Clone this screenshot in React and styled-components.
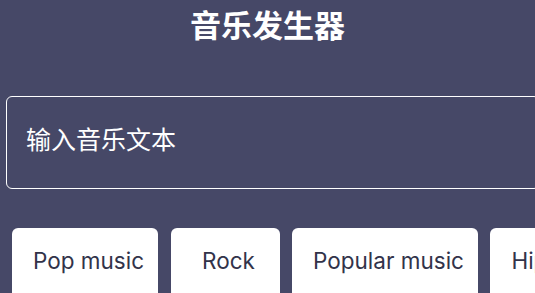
import React from "react";
import styled, { createGlobalStyle } from "styled-components";

const Global = createGlobalStyle`
  html, body { margin: 0; padding: 0; background: #464867; }
  body { overflow: hidden; }
  * { box-sizing: border-box; }
`;

const Page = styled.div`
  width: 535px;
  height: 293px;
  overflow: hidden;
  background: #464867;
  font-family: Inter, "Noto Sans CJK SC", sans-serif;
`;

const Title = styled.h1`
  margin: 0;
  padding-top: 2px;
  height: 49px;
  line-height: 44px;
  text-align: center;
  color: #ffffff;
  font-family: "Noto Sans CJK SC", sans-serif;
  font-weight: 700;
  font-size: 31px;
`;

const TextInput = styled.input`
  display: block;
  margin: 47px 0 0 6px;
  width: 534px;
  height: 93px;
  padding: 0 0 10px 19px;
  border: 1px solid #ffffff;
  border-radius: 6px;
  background: transparent;
  color: #ffffff;
  font-family: "Noto Sans CJK SC", sans-serif;
  font-size: 25px;
  outline: none;
  &::placeholder { color: #ffffff; opacity: 1; }
`;

const Chips = styled.div`
  display: flex;
  gap: 12.5px;
  margin-top: 39px;
  padding-left: 12px;
  width: 800px;
`;

const Chip = styled.button`
  flex: none;
  min-width: 109px;
  height: 80px;
  padding: 22px 14px 0 21px;
  border: none;
  border-radius: 6px;
  background: #ffffff;
  color: #32334a;
  font-family: Inter, sans-serif;
  font-size: 22.5px;
  font-weight: 400;
  line-height: 1;
  display: flex;
  justify-content: center;
  align-items: flex-start;
`;

const genres = ["Pop music", "Rock", "Popular music", "Hip hop"];

export default function App() {
  return (
    <Page>
      <Global />
      <Title>音乐发生器</Title>
      <TextInput placeholder="输入音乐文本" />
      <Chips>
        {genres.map((g) => (
          <Chip key={g}>{g}</Chip>
        ))}
      </Chips>
    </Page>
  );
}
